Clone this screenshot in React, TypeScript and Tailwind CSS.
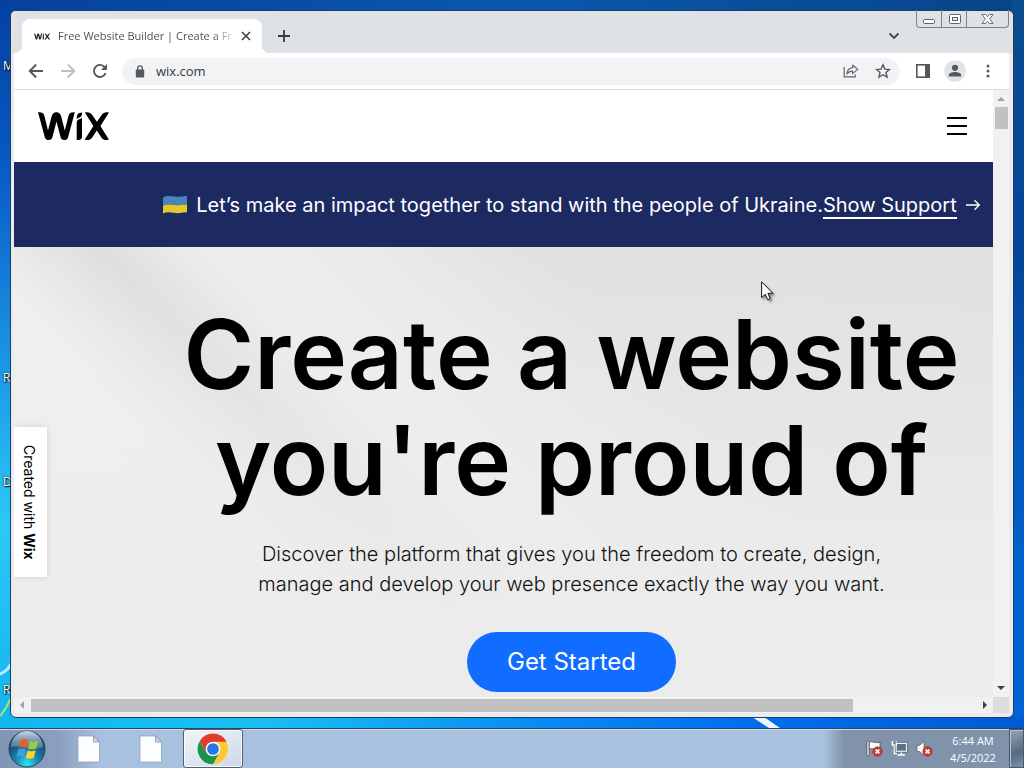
import React from "react";

const desktopLabels = [
  { text: "M", place: "top-[58px]" },
  { text: "R", place: "top-[370px]" },
  { text: "D", place: "top-[474px]" },
  { text: "R", place: "top-[682px]" },
];

function WixLogo({ className }: { className: string }) {
  return (
    <svg viewBox="0 0 71 28" className={className} aria-hidden="true">
      <path
        d="M0 0.3C3.4 0 5.6 0.8 6.5 4.2L10 18.5L13.4 5.2C14.2 1.8 15.8 0.2 18.4 0.2S22.6 1.8 23.4 5.2L26.8 18.5L30.4 4.2C31.2 0.8 33.4 0 36.8 0.3L30 25.4C29.2 28 27 28 24.6 27.8C23.4 27.4 22.9 26.4 22.4 24.6L18.5 9.5L14.6 24.6C14.1 26.4 13.6 27.4 12.4 27.8C9.8 28 7.7 28 6.9 25.4Z"
      />
      <path d="M44 0.4C44.1 3.4 43.6 4.4 41.5 5.4C40.5 5.9 39.5 6.1 38.7 7C38.5 3.6 39.5 2.1 41.2 1.1C42 0.6 43.2 0.4 44 0.4Z" />
      <path d="M44 5.2V24.4C44 27.2 42.6 28 38.7 27.9V11C38.7 8.5 39.5 8 41.2 7.3C42.7 6.7 43.5 6.3 44 5.2Z" />
      <path d="M62.4 14L71 27.8C67 28.2 65 27.8 63.4 25.4L58.8 18.4L54.2 25.4C52.6 27.8 50.6 28.2 46.6 27.8L55.4 14L46.8 0.4C50.4 -0.3 52.4 0.4 54.2 3L58.9 9.8L63.6 3C65.4 0.4 67.4 -0.3 71 0.4Z" />
    </svg>
  );
}

function UkraineFlag() {
  return (
    <svg viewBox="0 0 26 19" className="mr-2 h-[19px] w-[26px]" aria-hidden="true">
      <path d="M1 2.4C5 0.2 9 1 13 1.6C18 2.4 21 0.8 25 1V9.6C21 9 18 10.8 13 10C9 9.4 5 8.8 1 10.6Z" fill="#4a84bd" />
      <path d="M1 10.6C5 8.8 9 9.4 13 10C18 10.8 21 9 25 9.6V17.4C21 17 18 18.6 13 18C9 17.4 5 16.6 1 18.4Z" fill="#e3c92c" />
    </svg>
  );
}

function WindowButtons() {
  return (
    <div className="flex h-[18px] w-[93px] rounded-b-[4px] border border-t-0 border-[#7d838d]">
      <button aria-label="Minimize" className="flex w-[25px] items-center justify-center border-r border-[#7d838d]">
        <svg viewBox="0 0 13 13" className="h-[13px] w-[13px]" fill="#fff" stroke="#5d636d">
          <rect x="0.5" y="7.5" width="11" height="4" rx="1" />
        </svg>
      </button>
      <button aria-label="Maximize" className="flex w-[25px] items-center justify-center border-r border-[#7d838d]">
        <svg viewBox="0 0 13 13" className="h-[13px] w-[13px]" fill="#fff" stroke="#5d636d">
          <rect x="1.5" y="2.5" width="11" height="9" rx="1" />
          <rect x="4.5" y="5.5" width="5" height="3" fill="#e4e7ec" />
        </svg>
      </button>
      <button aria-label="Close" className="flex flex-1 items-center justify-center">
        <svg viewBox="0 0 13 13" className="h-[13px] w-[13px]" fill="#fff" stroke="#5d636d" strokeWidth="0.9">
          <path d="M1 2.5H4.6L6.5 4.8L8.4 2.5H12L8.7 7L12 11.5H8.4L6.5 9.2L4.6 11.5H1L4.3 7Z" />
        </svg>
      </button>
    </div>
  );
}

function TabStrip() {
  return (
    <div className="flex h-[42px] shrink-0 rounded-t-[5px] bg-[#dee1e6] pr-1">
      <div className="flex w-[11px] flex-col justify-end">
        <div className="h-2 rounded-br-lg bg-[#dee1e6] shadow-[4px_4px_0_0_#fff]" />
      </div>
      <div className="z-10 mt-2 flex w-[240px] items-center rounded-t-lg bg-white px-3">
        <WixLogo className="h-[7px] w-4 fill-[#222]" />
        <span className="ml-2 flex-1 bg-[linear-gradient(90deg,#45494d_88%,#45494d22_100%)] bg-clip-text font-['Open_Sans',sans-serif] text-[11px] whitespace-nowrap text-transparent">
          Free Website Builder | Create a Fr
        </span>
        <button aria-label="Close tab" className="-mr-px ml-2">
          <svg viewBox="0 0 10 10" className="h-[10px] w-[10px]" fill="none" stroke="#3c4043" strokeWidth="1.6">
            <path d="M1 1L9 9M9 1L1 9" />
          </svg>
        </button>
      </div>
      <div className="flex w-2 flex-col justify-end">
        <div className="h-2 rounded-bl-lg bg-[#dee1e6] shadow-[-4px_4px_0_0_#fff]" />
      </div>
      <button aria-label="New tab" className="mt-[7px] ml-2 self-center">
        <svg viewBox="0 0 12 12" className="h-3 w-3" fill="none" stroke="#35383c" strokeWidth="1.8">
          <path d="M6 0V12M0 6H12" />
        </svg>
      </button>
      <div className="flex-1" />
      <button aria-label="Search tabs" className="mt-[7px] mr-4 self-center">
        <svg viewBox="0 0 12 8" className="h-2 w-3" fill="none" stroke="#45494e" strokeWidth="1.8">
          <path d="M1.5 1.5L6 6L10.5 1.5" />
        </svg>
      </button>
      <div className="-mt-px">
        <WindowButtons />
      </div>
    </div>
  );
}

function Toolbar() {
  return (
    <div className="mr-1 ml-[3px] flex h-[37px] shrink-0 items-center border-b border-[#dcdee1] bg-white pl-3">
      <button aria-label="Back">
        <svg viewBox="0 0 20 20" className="h-5 w-5" fill="none" stroke="#55585d" strokeWidth="1.9">
          <path d="M17 10H4M10.2 3.5L3.7 10L10.2 16.5" />
        </svg>
      </button>
      <button aria-label="Forward" className="ml-3">
        <svg viewBox="0 0 20 20" className="h-5 w-5" fill="none" stroke="#bcbec2" strokeWidth="1.9">
          <path d="M3 10H16M9.8 3.5L16.3 10L9.8 16.5" />
        </svg>
      </button>
      <button aria-label="Reload" className="ml-3">
        <svg viewBox="0 0 20 20" className="h-5 w-5" fill="none" stroke="#55585d" strokeWidth="1.9">
          <path d="M15.6 12A6 6 0 1 1 14.6 6.1" />
          <path d="M17 3V9H11Z" fill="#55585d" stroke="none" />
        </svg>
      </button>
      <div className="ml-3 flex h-[27px] min-w-0 flex-1 items-center rounded-full bg-[#f1f3f4] pr-[9px] pl-[13px]">
        <svg viewBox="0 0 10 13" className="h-[13px] w-[10px] shrink-0" aria-hidden="true">
          <rect x="0.8" y="4.6" width="8.4" height="7.8" rx="1" fill="#55585d" />
          <path d="M2.7 5V3.2A2.3 2.3 0 0 1 7.3 3.2V5" fill="none" stroke="#55585d" strokeWidth="1.3" />
        </svg>
        <input
          aria-label="Address"
          defaultValue="wix.com"
          className="ml-[11px] min-w-0 flex-1 bg-transparent pt-px font-['Open_Sans',sans-serif] text-[13px] text-[#35383c] outline-none"
        />
        <button aria-label="Share">
          <svg viewBox="0 0 16 16" className="h-4 w-4" fill="none" stroke="#63666b" strokeWidth="1.2">
            <path d="M1.2 4V13.8H12.2V11.5" />
            <path d="M9.6 2.2L14.8 6.4L9.6 10.6V8.2C7 8.2 5.2 9 3.9 11C4.2 7.6 6.2 5 9.6 4.6Z" strokeLinejoin="round" />
          </svg>
        </button>
        <button aria-label="Bookmark" className="ml-4">
          <svg viewBox="0 0 16 16" className="h-4 w-4" fill="none" stroke="#55585d" strokeWidth="1.4">
            <path d="M8 1.8L9.9 6.1L14.5 6.5L11 9.6L12.1 14.1L8 11.7L3.9 14.1L5 9.6L1.5 6.5L6.1 6.1Z" />
          </svg>
        </button>
      </div>
      <button aria-label="Side panel" className="ml-4">
        <svg viewBox="0 0 14 14" className="h-[14px] w-[14px]">
          <rect x="0.8" y="0.8" width="12.4" height="12.4" fill="none" stroke="#55585d" strokeWidth="1.6" />
          <rect x="9" y="0" width="5" height="14" fill="#55585d" />
        </svg>
      </button>
      <button aria-label="Profile" className="ml-[14px]">
        <svg viewBox="0 0 22 22" className="h-[22px] w-[22px]">
          <circle cx="11" cy="11" r="10.8" fill="#e1e3e8" />
          <circle cx="11" cy="7.8" r="3.1" fill="#55595f" />
          <path d="M4.8 16.6V15.4C4.8 13.2 8.6 12.1 11 12.1S17.2 13.2 17.2 15.4V16.6Z" fill="#55595f" />
        </svg>
      </button>
      <button aria-label="More" className="mr-[19px] ml-5">
        <svg viewBox="0 0 4 14" className="h-[14px] w-1" fill="#55585d">
          <circle cx="2" cy="2" r="1.5" />
          <circle cx="2" cy="7" r="1.5" />
          <circle cx="2" cy="12" r="1.5" />
        </svg>
      </button>
    </div>
  );
}

function WebPage() {
  return (
    <div className="relative flex min-w-0 flex-1 flex-col overflow-hidden font-[Inter,sans-serif]">
      <header className="flex h-[72px] shrink-0 items-center justify-between bg-white pr-[26px] pl-6">
        <a href="#home" aria-label="Wix home">
          <WixLogo className="h-7 w-[71px] fill-black" />
        </a>
        <button aria-label="Menu" className="flex w-5 flex-col gap-[6px]">
          <span className="h-[2px] bg-black" />
          <span className="h-[2px] bg-black" />
          <span className="h-[2px] bg-black" />
        </button>
      </header>

      <div className="flex h-[85px] w-full min-w-[1115px] shrink-0 items-center justify-center bg-[#1d2961] text-xl whitespace-nowrap text-white">
        <UkraineFlag />
        <span>Let’s make an impact together to stand with the people of Ukraine.</span>
        <a href="#support" className="flex items-center">
          <span className="border-y-2 border-t-transparent border-b-white leading-6">Show Support</span>
          <svg viewBox="0 0 16 12" className="ml-2 h-3 w-4" fill="none" stroke="#fff" strokeWidth="1.3">
            <path d="M1 6H14M9.5 1.2L14.3 6L9.5 10.8" />
          </svg>
        </a>
      </div>

      <main className="flex w-full min-w-[1115px] flex-1 flex-col items-center bg-[linear-gradient(0deg,#ececec_20%,#ececec00_100%),linear-gradient(45deg,#f3f3f3_0%,#f1f1f1_25%,#dedede_34%,#eeeeee_41%,#ebebeb_50%,#e1e1e1_62%,#e0e0e0_100%)] pt-[54px]">
        <h1 className="text-center text-[96px] leading-[106px] font-semibold whitespace-nowrap text-black">
          Create a website
          <br />
          you're proud of
        </h1>
        <p className="mt-[26px] text-center text-xl leading-[30px] font-light text-[#111]">
          Discover the platform that gives you the freedom to create, design,
          <br />
          manage and develop your web presence exactly the way you want.
        </p>
        <button className="mt-[33px] h-[60px] w-[209px] rounded-full bg-[#116dff] text-2xl text-white">
          Get Started
        </button>
      </main>

      <a
        href="#created"
        className="absolute top-[337px] left-0 flex h-[150px] w-[33px] items-center justify-center bg-white pr-1 text-sm text-black shadow-[0_0_6px_#0000001f] [writing-mode:vertical-rl]"
      >
        <span>
          Created with <b>Wix</b>
        </span>
      </a>
    </div>
  );
}

function VerticalScrollbar() {
  return (
    <div className="flex w-4 flex-col items-center justify-between bg-[#f1f1f1] py-[7px]" aria-hidden="true">
      <div className="flex flex-col items-center gap-[6px]">
        <svg viewBox="0 0 8 4" className="h-1 w-2" fill="#a2a2a2">
          <path d="M4 0L8 4H0Z" />
        </svg>
        <div className="h-[22px] w-[13px] bg-[#c1c1c1]" />
      </div>
      <svg viewBox="0 0 8 4" className="h-1 w-2" fill="#404040">
        <path d="M0 0H8L4 4Z" />
      </svg>
    </div>
  );
}

function HorizontalScrollbar() {
  return (
    <div className="mr-1 ml-[3px] flex h-4 shrink-0" aria-hidden="true">
      <div className="flex flex-1 items-center bg-[#f1f1f1] px-[6px]">
        <svg viewBox="0 0 4 8" className="h-2 w-1" fill="#a2a2a2">
          <path d="M4 0V8L0 4Z" />
        </svg>
        <div className="mx-[7px] flex-1">
          <div className="h-[13px] w-[87%] bg-[#c1c1c1]" />
        </div>
        <svg viewBox="0 0 4 8" className="h-2 w-1" fill="#404040">
          <path d="M0 0V8L4 4Z" />
        </svg>
      </div>
      <div className="w-4 bg-[#dcdcdc]" />
    </div>
  );
}

function Cursor() {
  return (
    <svg viewBox="0 0 14 22" className="absolute top-[281px] left-[761px] z-20 h-[22px] w-[14px] drop-shadow-[2px_2px_1px_#00000066]" aria-hidden="true">
      <path d="M0.6 0.8V16.6L4.3 13.2L6.7 18.8L9.3 17.7L6.9 12.3H11.9Z" fill="#fff" stroke="#111" strokeWidth="1" />
    </svg>
  );
}

function StartOrb() {
  return (
    <svg viewBox="0 0 38 38" className="h-[38px] w-[38px]" aria-hidden="true">
      <defs>
        <radialGradient id="orb" cx="50%" cy="92%" r="75%">
          <stop offset="0" stopColor="#2fe6f6" />
          <stop offset="0.45" stopColor="#1a84ab" />
          <stop offset="1" stopColor="#18415f" />
        </radialGradient>
        <linearGradient id="gloss" x1="0" y1="0" x2="0" y2="1">
          <stop offset="0" stopColor="#dce8f2" stopOpacity="0.9" />
          <stop offset="1" stopColor="#8fb0c8" stopOpacity="0.4" />
        </linearGradient>
      </defs>
      <circle cx="19" cy="19" r="18" fill="url(#orb)" stroke="#24465f" />
      <path d="M3 17A16 16 0 0 1 35 17C27 21 12 15 3 17Z" fill="url(#gloss)" />
      <path d="M12.8 10.2C15.4 8.4 18 8.6 20.4 10L18.4 17.8C15.8 16.4 13.2 16.5 10.6 18Z" fill="#ee5a24" />
      <path d="M22 10.8C24.6 12.2 27.2 12.2 30.2 10.6L28.2 18.4C25.6 19.8 22.6 19.8 20 18.4Z" fill="#9acb3c" />
      <path d="M10.2 19.6C12.8 18 15.4 18.2 18 19.4L16 27C13.6 25.6 11 25.8 8.4 27.2Z" fill="#3fa0e0" />
      <path d="M19.6 20.2C22 21.6 25 21.6 27.8 20.2L25.8 27.8C23 29.2 20 29.2 17.6 27.8Z" fill="#fcd22e" />
    </svg>
  );
}

function FileIcon() {
  return (
    <svg viewBox="0 0 24 28" className="h-7 w-6" aria-hidden="true">
      <path d="M1 1H16.5L22.5 7V27H1Z" fill="#fcfdfe" stroke="#8a9bb0" strokeWidth="0.7" />
      <path d="M16.5 1V7H22.5Z" fill="#cfd8e2" stroke="#7488a0" strokeWidth="0.7" />
    </svg>
  );
}

function ChromeIcon() {
  return (
    <svg viewBox="0 0 48 48" className="h-8 w-8" aria-hidden="true">
      <circle cx="24" cy="24" r="23" fill="#fff" />
      <path d="M24 24H44V12.5A23 23 0 0 0 4.08 12.5L14.47 29.5L24 13H43.92A23 23 0 0 0 4.08 12.5Z" fill="#e33b2e" />
      <path d="M24 13H43.92A23 23 0 0 1 24 47L33.5 29.5Z" fill="#fcc934" />
      <path d="M4.08 12.5A23 23 0 0 0 24 47L33.5 29.5H14.47Z" fill="#1e9246" />
      <circle cx="24" cy="24" r="11" fill="#fff" />
      <circle cx="24" cy="24" r="8.8" fill="#2a74e8" />
    </svg>
  );
}

function ErrorMark() {
  return (
    <>
      <circle cx="11.5" cy="11.5" r="4.7" fill="#d33a34" stroke="#8e2622" strokeWidth="0.6" />
      <path d="M9.6 9.6L13.4 13.4M13.4 9.6L9.6 13.4" stroke="#fff" strokeWidth="1.5" />
    </>
  );
}

function Tray() {
  return (
    <div className="mr-1 flex items-center gap-2">
      <svg viewBox="0 0 17 17" className="h-[17px] w-[17px]" aria-label="Action center">
        <path d="M1 1H3V16H1Z" fill="#fff" stroke="#333" strokeWidth="0.6" />
        <path d="M3.4 2C6 1 8 3.4 14 2.4V9C9 10 6 7.8 3.4 9Z" fill="#fff" stroke="#333" strokeWidth="0.6" />
        <ErrorMark />
      </svg>
      <svg viewBox="0 0 17 17" className="h-[17px] w-[17px]" aria-label="Network">
        <rect x="5" y="3.2" width="10.6" height="8.2" fill="#5d7185" stroke="#fff" strokeWidth="1.4" />
        <path d="M6.5 15H14M10.3 11.5V15" stroke="#fff" strokeWidth="1.5" />
        <path d="M1.4 1V5H5.4V1M3.4 5V13.5H6" fill="none" stroke="#fff" strokeWidth="1.4" />
        <path d="M4.2 2.4H16.4V12.2H4.2Z" fill="none" stroke="#2c333b" strokeWidth="0.5" />
      </svg>
      <svg viewBox="0 0 17 17" className="h-[17px] w-[17px]" aria-label="Volume muted">
        <path d="M1 5.5H3.5L8 1.5V15.5L3.5 11.5H1Z" fill="#fff" stroke="#444" strokeWidth="0.6" />
        <ErrorMark />
      </svg>
    </div>
  );
}

function Taskbar() {
  return (
    <footer className="flex h-10 shrink-0 items-stretch border-t border-[#2d4660] bg-[linear-gradient(90deg,#8196b4_0,#8ba0bf_60px,#a8c1de_100px,#a8c1de_calc(100%-200px),#8093ab_calc(100%-180px),#7f93ab_100%)] font-['Open_Sans',sans-serif] shadow-[inset_0_1px_0_#c9dcee]">
      <button aria-label="Start" className="ml-2 flex items-center">
        <StartOrb />
      </button>
      <button aria-label="Document" className="ml-[31px] flex items-center">
        <FileIcon />
      </button>
      <button aria-label="Document" className="ml-[38px] flex items-center">
        <FileIcon />
      </button>
      <button
        aria-label="Chrome"
        className="ml-5 flex w-[60px] items-center justify-center rounded-[3px] border border-[#4d6077] bg-[linear-gradient(150deg,#f2f5f9,#ccd8e6)] shadow-[inset_0_0_0_1px_#ffffffcc]"
      >
        <ChromeIcon />
      </button>
      <div className="flex-1" />
      <Tray />
      <div className="flex w-[72px] flex-col items-center justify-center text-center text-[11px] leading-[17px] text-white">
        <span>6:44 AM</span>
        <span>4/5/2022</span>
      </div>
      <button
        aria-label="Show desktop"
        className="w-[15px] border border-[#47596e] bg-[linear-gradient(160deg,#93a4b7,#566a80_60%,#7e91a6)] shadow-[inset_1px_1px_0_#b4c2d0]"
      />
    </footer>
  );
}

export default function App() {
  return (
    <div className="flex min-h-screen flex-col">
      <div className="relative flex flex-1 flex-col overflow-hidden bg-[linear-gradient(90deg,transparent_0%,transparent_30%,#0058c8_75%),linear-gradient(180deg,#0640a0_0%,#0759c4_22%,#1c9be8_52%,#2cc8f6_72%,#12b4f0_100%)] p-[10px]">
        <div className="absolute inset-x-0 top-0 h-3 bg-[linear-gradient(90deg,#0640a0,#0a58ae_50%,#074488)]" />
        <div className="absolute inset-y-0 right-0 w-3 bg-[linear-gradient(180deg,#0a4c8e,#04459a_35%,#0060cc_75%,#0062d6)]" />
        <div className="absolute inset-x-0 bottom-0 h-[11px] bg-[linear-gradient(90deg,#10b8f0,#19c0f4_25%,#0a8cf4_52%,#0070f0_72%,#005ad2)]" />
        <svg viewBox="0 0 30 11" className="absolute bottom-0 left-[752px] h-[11px] w-[30px]" aria-hidden="true">
          <path d="M0 0H12L28 11H17Z" fill="#eaf6ff" />
        </svg>
        <svg viewBox="0 0 11 60" className="absolute bottom-[6px] left-0 h-[60px] w-[11px]" fill="none" aria-hidden="true">
          <path d="M0 12C5 10 9 6 11 2" stroke="#b6ecff" strokeWidth="3" />
          <path d="M0 54C4 50 8 42 11 36" stroke="#a6e67a" strokeWidth="2" />
        </svg>
        {desktopLabels.map((label, i) => (
          <span
            key={i}
            className={`absolute left-[3px] font-['Open_Sans',sans-serif] text-xs leading-4 text-white [text-shadow:1px_1px_1px_#000,0_0_2px_#000] ${label.place}`}
          >
            {label.text}
          </span>
        ))}

        <section className="relative flex flex-1 flex-col rounded-[6px] border border-[#1c3f5f] bg-[#e9ebee] pb-1">
          <TabStrip />
          <Toolbar />
          <div className="mr-1 ml-[3px] flex min-h-0 flex-1">
            <WebPage />
            <VerticalScrollbar />
          </div>
          <HorizontalScrollbar />
        </section>
        <Cursor />
      </div>
      <Taskbar />
    </div>
  );
}
